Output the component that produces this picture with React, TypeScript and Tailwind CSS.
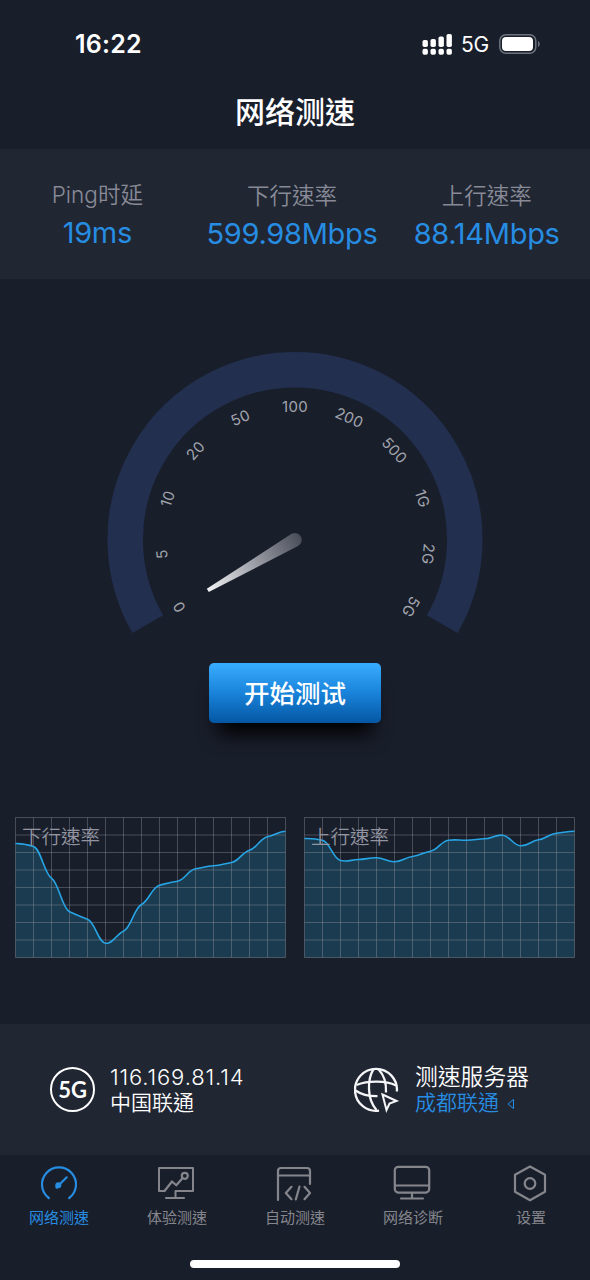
import { useState } from 'react'
import type { ReactNode } from 'react'

const STATS = [
  { label: 'Ping时延', value: '19ms', offset: 'pt-[31px]' },
  { label: '下行速率', value: '599.98Mbps', offset: 'pt-8' },
  { label: '上行速率', value: '88.14Mbps', offset: 'pt-8' },
]

const MARKS = ['0', '5', '10', '20', '50', '100', '200', '500', '1G', '2G', '5G']

const DOWNLOAD = [26, 29, 60.7, 94.3, 101.7, 125.7, 113.7, 87, 67.7, 63.7, 51.3, 48.3, 45, 32.7, 19.3, 13.7]
const UPLOAD = [21, 22.7, 43, 42, 40.3, 44.3, 39, 33.7, 22.7, 22.7, 21.3, 17.7, 28.3, 22.3, 15.7, 13.7]

const STEP = 18

function linePath(points: number[]) {
  const slope = (i: number) => {
    const prev = points[Math.max(i - 1, 0)]
    const next = points[Math.min(i + 1, points.length - 1)]
    return (next - prev) * 0.08
  }
  return points.reduce((d, y, i) => {
    if (i === 0) return `M0 ${y}`
    const x0 = (i - 1) * STEP
    const x1 = i * STEP
    const c1 = `${x0 + STEP * 0.42} ${points[i - 1] + slope(i - 1)}`
    const c2 = `${x1 - STEP * 0.42} ${y - slope(i)}`
    return `${d} C${c1} ${c2} ${x1} ${y}`
  }, '')
}

function StatusBar() {
  return (
    <div className="flex h-[76px] items-center justify-between pt-[13px] pr-[49px] pl-[75px] text-white">
      <span className="text-[25px] leading-none font-semibold tracking-[0.2px]">16:22</span>
      <div className="flex items-center">
        <svg className="-mt-0.5" width="30" height="22" viewBox="0 0 30 22" fill="currentColor">
          {[7, 6, 3.5, 1].map((y, i) => (
            <g key={y}>
              <rect x={i * 8 + 0.5} y={y} width="5.4" height={14 - y} rx="1.8" />
              <rect x={i * 8 + 0.5} y="15.7" width="5.4" height="6" rx="1.8" />
            </g>
          ))}
        </svg>
        <span className="ml-[9px] w-[28px] text-[21px] leading-none tracking-[-0.3px]">5G</span>
        <svg className="-mt-0.5 ml-[10px]" width="42" height="20" viewBox="0 0 42 20">
          <rect x="0.8" y="0.8" width="36" height="18.4" rx="6" fill="none" stroke="#6f737d" strokeWidth="1.5" />
          <rect x="3" y="3" width="31" height="14" rx="4" fill="#fff" />
          <path d="M39 7 C41.3 8 41.3 12 39 13 Z" fill="#6f737d" />
        </svg>
      </div>
    </div>
  )
}

function Gauge() {
  return (
    <svg className="block" width="590" height="385" viewBox="0 278 590 385">
      <defs>
        <linearGradient id="needle" x1="208" y1="590" x2="300" y2="538" gradientUnits="userSpaceOnUse">
          <stop offset="0" stopColor="#f0f1f4" />
          <stop offset="1" stopColor="#4a4e5a" />
        </linearGradient>
      </defs>
      <path
        d="M147.8 624.2 A169.8 169.8 0 1 1 442.2 624.2"
        fill="none"
        stroke="#222f4e"
        strokeWidth="35.5"
      />
      {MARKS.map((mark, i) => (
        <text
          key={mark}
          x="295"
          y="411.5"
          transform={`rotate(${-120 + i * 24} 295 540)`}
          textAnchor="middle"
          className="fill-[#a2a5ad] text-[15px] tracking-[0.4px]"
        >
          {mark}
        </text>
      ))}
      <path
        d="M206.8 588.8 L291.6 533.8 A6.8 6.8 0 1 1 298 546 L208.8 592 Z"
        fill="url(#needle)"
      />
    </svg>
  )
}

function SpeedChart({ title, points }: { title: string; points: number[] }) {
  const line = linePath(points)

  return (
    <div className="relative h-[141px] w-[271px]">
      <svg className="block" width="271" height="141" viewBox="-0.5 -0.5 271 141">
        <path d={`${line} L270 140 L0 140 Z`} fill="#1a3b50" />
        <g stroke="#9b9ba3" strokeOpacity="0.38" strokeWidth="1">
          {Array.from({ length: 16 }, (_, i) => (
            <path key={`v${i}`} d={`M${i * STEP} 0 V140`} />
          ))}
          {Array.from({ length: 9 }, (_, i) => (
            <path key={`h${i}`} d={`M0 ${i * 17.5} H270`} />
          ))}
        </g>
        <path d={line} fill="none" stroke="#27a4e3" strokeWidth="1.6" />
      </svg>
      <span className="absolute top-[10px] left-[7px] text-[19.5px] leading-[20px] font-[350] text-[#9295a0]">{title}</span>
    </div>
  )
}

function GlobeIcon() {
  return (
    <svg width="46" height="46" viewBox="0 0 46 46" fill="none" stroke="#f5f6f8" strokeWidth="2.3">
      <path d="M25 43.6 A21 21 0 1 1 42.9 24.5" />
      <path d="M19.5 2.2 C13.5 12 12.5 32 22.5 43" />
      <path d="M24.5 2.2 C30 8 32.5 16 32 25.5" />
      <path d="M2.5 18 C14 13.5 32 13.5 42 18.5" />
      <path d="M1.5 23.5 C8 28 16 29.3 23.5 29.2" />
      <path d="M28.5 27.5 L42.5 34 L35.5 36.5 L32.5 43 Z" strokeWidth="2" />
    </svg>
  )
}

const TABS: { label: string; icon: ReactNode }[] = [
  {
    label: '网络测速',
    icon: (
      <>
        <path d="M10.8 33 A17 17 0 1 1 31.2 33" />
        <path d="M20.5 20.5 L28.7 12.3" />
        <circle cx="20.3" cy="20.2" r="3" fill="currentColor" stroke="none" />
        <path d="M18.8 22.2 L21 20" strokeWidth="3" />
      </>
    ),
  },
  {
    label: '体验测速',
    icon: (
      <>
        <path d="M8.5 26 H3 V3 H37 V26 H19.5 V33" strokeWidth="2" />
        <path d="M10 33 H28" />
        <path d="M8.5 26 L16 16.5 L20.3 20.3 L26.2 13.5" />
        <circle cx="28.8" cy="10.8" r="3" />
      </>
    ),
  },
  {
    label: '自动测速',
    icon: (
      <>
        <path d="M4 35 V6 Q4 3 7 3 H33 Q36 3 36 6 V19" />
        <path d="M4 10.5 H36" />
        <path d="M17.5 21.8 L11.8 28 L17.5 34.2 M30.5 21.8 L36 28 L30.5 34.2 M25.5 21.5 L21.8 34.5" />
      </>
    ),
  },
  {
    label: '网络诊断',
    icon: (
      <>
        <rect x="2.8" y="1.8" width="34.4" height="25.8" rx="3.5" />
        <path d="M3 20.5 H37 M20 28 V33.5 M9 33.5 H31" />
      </>
    ),
  },
  {
    label: '设置',
    icon: (
      <>
        <path d="M20 1.5 L35 9.8 V26.8 L20 35.3 L5 26.8 V9.8 Z" />
        <circle cx="20" cy="18.5" r="5.3" />
      </>
    ),
  },
]

export default function App() {
  const [active, setActive] = useState(0)

  return (
    <div className="h-[1280px] w-[590px] overflow-hidden bg-[#191e2b] font-[Inter,'Noto_Sans_CJK_TC',sans-serif]">
      <header className="h-[149px]">
        <StatusBar />
        <h1 className="pt-4 text-center text-[30px] leading-[40px] font-medium text-white">网络测速</h1>
      </header>

      <section className="h-[130px] bg-[#212633]">
        <div className="grid w-[584px] grid-cols-3">
          {STATS.map(s => (
            <div key={s.label} className={`flex flex-col items-center ${s.offset}`}>
              <span className="text-[22.5px] leading-[30px] font-[350] text-[#888b97]">{s.label}</span>
              <span className="mt-1 text-[29px] leading-[37px] tracking-[-0.3px] whitespace-nowrap text-[#268de2]">{s.value}</span>
            </div>
          ))}
        </div>
      </section>

      <div className="-mt-px">
        <Gauge />
      </div>

      <div className="flex h-[154px] justify-center">
        <button className="h-[60px] w-[172px] rounded-[5px] bg-linear-to-b from-[#38adff] via-[#1983da] to-[#0557a3] pt-0.5 text-[25.5px] font-medium text-white shadow-[0_20px_20px_-9px_#000]">
          开始测试
        </button>
      </div>

      <section className="flex h-[207px] justify-between px-[15px]">
        <SpeedChart title="下行速率" points={DOWNLOAD} />
        <SpeedChart title="上行速率" points={UPLOAD} />
      </section>

      <section className="flex h-[131px] items-center bg-[#212633] text-white">
        <div className="flex w-[304px] items-center pl-[50px]">
          <div className="flex size-[45px] items-center justify-center rounded-full border-2 border-white font-[Lato,sans-serif] text-[22px] leading-none font-bold">
            5G
          </div>
          <div className="ml-[15px] flex flex-col leading-[26px]">
            <span className="text-[22px] font-[350] tracking-[0.85px]">116.169.81.14</span>
            <span className="text-[21px] font-[350]">中国联通</span>
          </div>
        </div>
        <div className="flex items-center pl-[50px]">
          <GlobeIcon />
          <div className="ml-[15px] flex flex-col leading-[26px]">
            <span className="text-[22.8px] font-[350]">测速服务器</span>
            <span className="flex items-center text-[21px] font-[350] text-[#268de2]">
              成都联通
              <svg className="mt-0.5 ml-2" width="8" height="12" viewBox="0 0 8 12" fill="none" stroke="currentColor">
                <path d="M6.5 1.5 V10.5 L1 6 Z" />
              </svg>
            </span>
          </div>
        </div>
      </section>

      <nav className="grid h-[105px] grid-cols-5 pt-[10px]">
        {TABS.map((tab, i) => (
          <button
            key={tab.label}
            onClick={() => setActive(i)}
            className={`flex flex-col items-center ${active === i ? 'text-[#268de2]' : 'text-[#85868c]'}`}
          >
            <svg
              className="mr-0.5"
              width="40"
              height="38"
              viewBox="0 0 40 38"
              fill="none"
              stroke="currentColor"
              strokeWidth="2.2"
              strokeLinecap="round"
              strokeLinejoin="round"
            >
              {tab.icon}
            </svg>
            <span className="mt-[5px] text-[15px] leading-5">{tab.label}</span>
          </button>
        ))}
      </nav>
      <div className="mx-auto h-2 w-[210px] rounded-full bg-white" />
    </div>
  )
}
